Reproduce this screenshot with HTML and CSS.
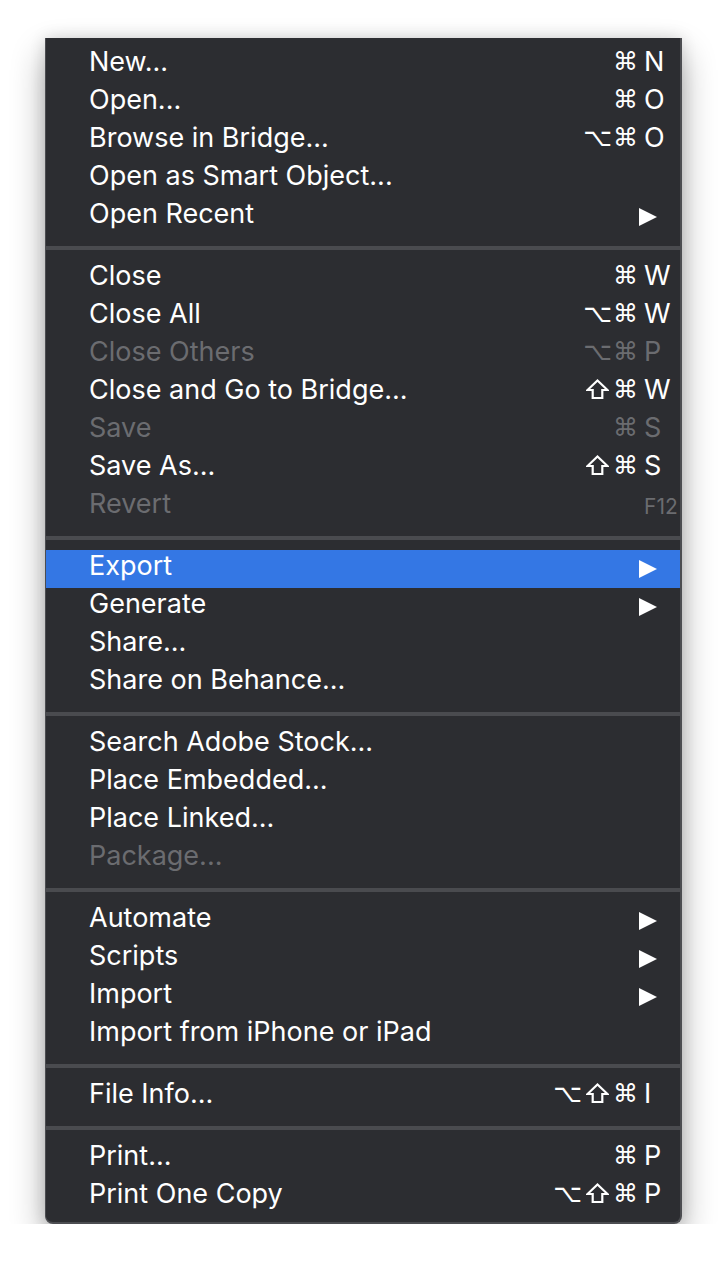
FILE: index.html
```html
<!DOCTYPE html>
<html lang="en">
<head>
    <meta charset="UTF-8">
    <meta name="viewport" content="width=device-width, initial-scale=1.0">
    <title>File Menu</title>
    <link rel="stylesheet" href="styles.css">
</head>
<body>

<div class="menu">
    <div class="item"><span class="label">New...</span><span class="mods">⌘</span><span class="key">N</span></div>
    <div class="item"><span class="label">Open...</span><span class="mods">⌘</span><span class="key">O</span></div>
    <div class="item"><span class="label">Browse in Bridge...</span><span class="mods">⌥⌘</span><span class="key">O</span></div>
    <div class="item"><span class="label">Open as Smart Object...</span></div>
    <div class="item"><span class="label">Open Recent</span><span class="arrow"></span></div>

    <div class="sep"></div>

    <div class="item"><span class="label">Close</span><span class="mods">⌘</span><span class="key">W</span></div>
    <div class="item"><span class="label">Close All</span><span class="mods">⌥⌘</span><span class="key">W</span></div>
    <div class="item disabled"><span class="label">Close Others</span><span class="mods">⌥⌘</span><span class="key">P</span></div>
    <div class="item"><span class="label">Close and Go to Bridge...</span><span class="mods"><svg class="shift" viewBox="0 0 23 20"><path d="M11.5 1.5 L21.5 11 H16.3 V19 H6.7 V11 H1.5 Z"/></svg>⌘</span><span class="key">W</span></div>
    <div class="item disabled"><span class="label">Save</span><span class="mods">⌘</span><span class="key">S</span></div>
    <div class="item"><span class="label">Save As...</span><span class="mods"><svg class="shift" viewBox="0 0 23 20"><path d="M11.5 1.5 L21.5 11 H16.3 V19 H6.7 V11 H1.5 Z"/></svg>⌘</span><span class="key">S</span></div>
    <div class="item disabled"><span class="label">Revert</span><span class="mods"></span><span class="key fkey">F12</span></div>

    <div class="sep"></div>

    <div class="item active"><span class="label">Export</span><span class="arrow"></span></div>
    <div class="item"><span class="label">Generate</span><span class="arrow"></span></div>
    <div class="item"><span class="label">Share...</span></div>
    <div class="item"><span class="label">Share on Behance...</span></div>

    <div class="sep"></div>

    <div class="item"><span class="label">Search Adobe Stock...</span></div>
    <div class="item"><span class="label">Place Embedded...</span></div>
    <div class="item"><span class="label">Place Linked...</span></div>
    <div class="item disabled"><span class="label">Package...</span></div>

    <div class="sep"></div>

    <div class="item"><span class="label">Automate</span><span class="arrow"></span></div>
    <div class="item"><span class="label">Scripts</span><span class="arrow"></span></div>
    <div class="item"><span class="label">Import</span><span class="arrow"></span></div>
    <div class="item"><span class="label">Import from iPhone or iPad</span></div>

    <div class="sep"></div>

    <div class="item"><span class="label">File Info...</span><span class="mods">⌥<svg class="shift" viewBox="0 0 23 20"><path d="M11.5 1.5 L21.5 11 H16.3 V19 H6.7 V11 H1.5 Z"/></svg>⌘</span><span class="key">I</span></div>

    <div class="sep"></div>

    <div class="item"><span class="label">Print...</span><span class="mods">⌘</span><span class="key">P</span></div>
    <div class="item"><span class="label">Print One Copy</span><span class="mods">⌥<svg class="shift" viewBox="0 0 23 20"><path d="M11.5 1.5 L21.5 11 H16.3 V19 H6.7 V11 H1.5 Z"/></svg>⌘</span><span class="key">P</span></div>
</div>

</body>
</html>
```

FILE: styles.css
```css
/* Page */
body {
    margin: 0;
    background: #ffffff;
    font-family: Inter, "Liberation Sans", sans-serif;
}

/* The dropdown itself, cut off at the top like the screenshot */
.menu {
    margin: 38px 0 0 45px;
    width: 637px;
    box-sizing: border-box;
    padding: 8px 0 6px 0;
    background: #2c2d31;
    border: 1px solid #4c4d51;
    border-top: none;
    border-right-width: 2px;
    border-bottom-width: 2px;
    border-radius: 0 0 8px 8px;
    box-shadow: 0 16px 34px rgba(0, 0, 0, 0.32), 0 0 16px rgba(0, 0, 0, 0.14);
    color: #ffffff;
}

/* One line of the menu */
.item {
    display: flex;
    align-items: center;
    height: 38px;
    box-sizing: border-box;
    padding: 0 0 6px 43px;
    font-size: 27px;
    line-height: 32px;
    white-space: nowrap;
}

.item.active {
    background: #3477e4;
}

.item.disabled {
    color: #6b6c70;
}

.label {
    flex: 1;
}

/* Modifier keys sit right-aligned, the key letter in its own column */
.mods {
    font-family: "DejaVu Sans", sans-serif;
    font-size: 25px;
    letter-spacing: 1px;
    text-align: right;
    margin-right: 5px;
}

/* Mac-style outlined shift arrow */
.shift {
    width: 23px;
    height: 20px;
    margin: 0 4px 0 3px;
    vertical-align: -1px;
    fill: none;
    stroke: currentColor;
    stroke-width: 2.2;
}

.key {
    width: 36px;
    text-align: left;
}

.fkey {
    font-size: 21px;
    padding-top: 6px;
}

/* Submenu triangle */
.arrow {
    width: 0;
    height: 0;
    border-left: 18px solid #ffffff;
    border-top: 9.5px solid transparent;
    border-bottom: 9.5px solid transparent;
    margin: 6px 23px 0 0;
}

/* Group divider */
.sep {
    height: 4px;
    margin: 10px 0;
    background: #4a4b4f;
}
```
